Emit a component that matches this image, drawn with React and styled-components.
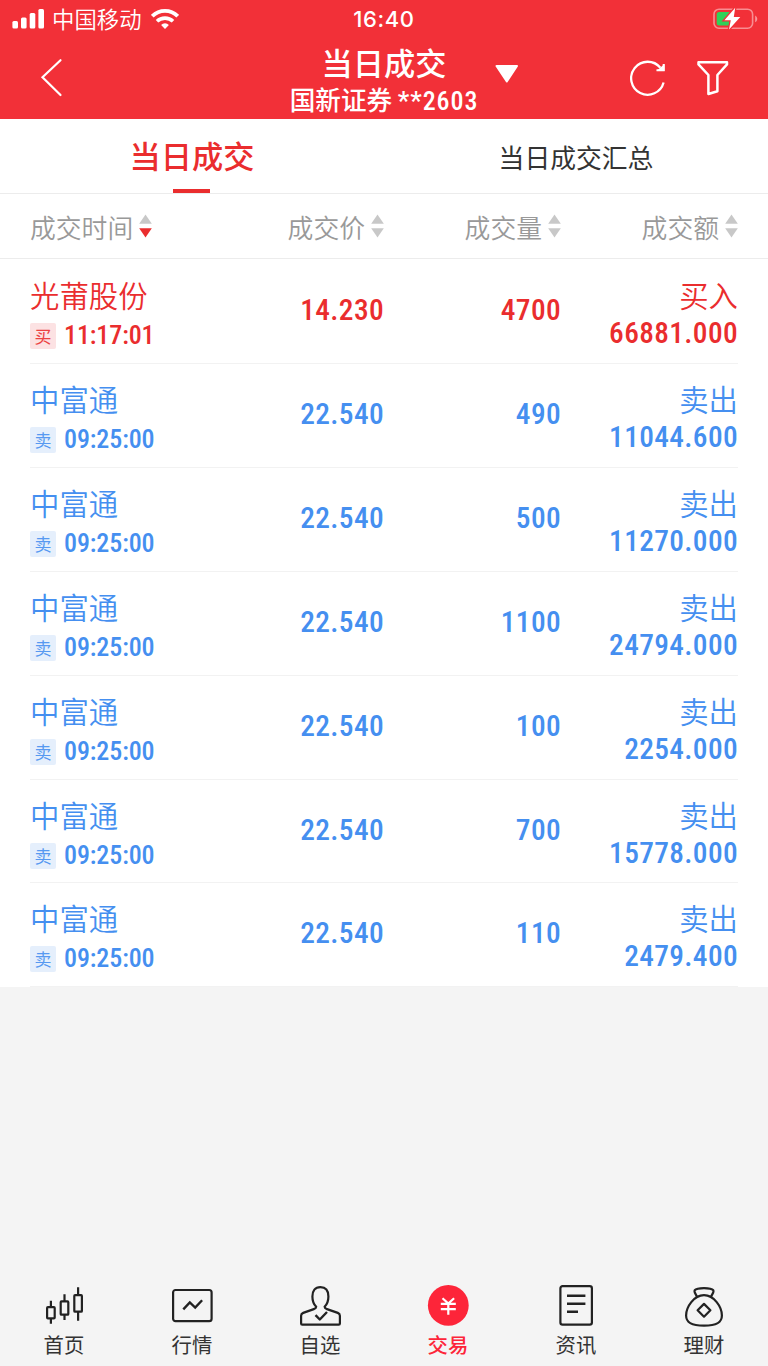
import React from "react";
import styled, { createGlobalStyle } from "styled-components";

const RED = "#ea2d2e";
const BLUE = "#458ff0";

const trades = [
  { name: "光莆股份", time: "11:17:01", price: "14.230", volume: "4700", amount: "66881.000", buy: true },
  { name: "中富通", time: "09:25:00", price: "22.540", volume: "490", amount: "11044.600" },
  { name: "中富通", time: "09:25:00", price: "22.540", volume: "500", amount: "11270.000" },
  { name: "中富通", time: "09:25:00", price: "22.540", volume: "1100", amount: "24794.000" },
  { name: "中富通", time: "09:25:00", price: "22.540", volume: "100", amount: "2254.000" },
  { name: "中富通", time: "09:25:00", price: "22.540", volume: "700", amount: "15778.000" },
  { name: "中富通", time: "09:25:00", price: "22.540", volume: "110", amount: "2479.400" },
];

const columns = [
  { label: "成交时间", sorted: true },
  { label: "成交价" },
  { label: "成交量" },
  { label: "成交额" },
];

const CandleIcon = () => (
  <svg width="44" height="44" viewBox="0 0 44 44" fill="none" stroke="#222" strokeWidth="2.2">
    <rect x="5.1" y="22.1" width="7.6" height="11.2" rx="0.8" />
    <path d="M8.9 15.7v6.4M8.9 33.3v5.4" />
    <rect x="18.7" y="16.4" width="7.6" height="13.3" rx="0.8" />
    <path d="M22.5 9.3v7M22.5 29.7v5.3" />
    <rect x="32.3" y="10.1" width="7.6" height="16.6" rx="0.8" />
    <path d="M36.1 2.3v7.8M36.1 26.7v9" />
  </svg>
);

const ChartIcon = () => (
  <svg width="44" height="44" viewBox="0 0 44 44" fill="none" stroke="#222" strokeWidth="2.2">
    <rect x="3.1" y="5" width="38.5" height="31.2" rx="2.4" />
    <path d="M13.3 24.4l6.5-7 5.4 5.2 6.9-7.4" strokeWidth="2.4" />
  </svg>
);

const PersonIcon = () => (
  <svg width="44" height="44" viewBox="0 0 44 44" fill="none" stroke="#222" strokeWidth="2.2" strokeLinejoin="round">
    <path d="M18.2 21.8C15.6 19.2 14.4 16 14.4 11.5C14.4 5.8 17 2.1 22.4 2.1C27.8 2.1 30.4 5.8 30.4 11.5C30.4 16 29.2 19.2 26.6 21.8C26.6 23 27.6 23.6 29 24.1L39.8 27.9Q41.9 28.7 41.9 30.7V38.4Q41.9 39.6 40.7 39.6H4.3Q3.1 39.6 3.1 38.4V30.7Q3.1 28.7 5.2 27.9L15.8 24.1C17.2 23.6 18.2 23 18.2 21.8Z" />
    <path d="M17.5 30.2l4.3 4.3 7.2-7.5" strokeWidth="2.4" />
  </svg>
);

const YuanIcon = () => (
  <svg width="44" height="44" viewBox="0 0 44 44" fill="none">
    <circle cx="22.3" cy="20.4" r="20.4" fill="#fd2539" />
    <path d="M16.5 13.2L22.3 18.6L28.1 13.2M22.3 18.6V29.8M14.8 18.9H29.8M14.8 24.1H29.8" stroke="#fff" strokeWidth="2.2" />
  </svg>
);

const NewsIcon = () => (
  <svg width="44" height="44" viewBox="0 0 44 44" fill="none" stroke="#222" strokeWidth="2.2">
    <rect x="6.4" y="1.2" width="31.5" height="38.4" rx="2.2" />
    <path d="M13 10.7h18.4M13 18.7h18.4M13 26.7h11" strokeWidth="2.4" />
  </svg>
);

const MoneyIcon = () => (
  <svg width="44" height="44" viewBox="0 0 44 44" fill="none" stroke="#222" strokeWidth="2.2" strokeLinejoin="round">
    <path d="M15 12C14.2 9.3 11.6 6.9 12.7 5.3C15 2.4 29 2.4 31.3 5.3C32.4 6.9 29.8 9.3 29 12" />
    <path d="M22 10.2C12 10.2 4.1 22 4.1 30.5C4.1 37.5 9 40.7 22 40.7C35 40.7 39.9 37.5 39.9 30.5C39.9 22 32 10.2 22 10.2Z" />
    <path d="M22 18.9l6.4 6.4l-6.4 6.4l-6.4-6.4z" />
  </svg>
);

const navItems = [
  { label: "首页", Icon: CandleIcon },
  { label: "行情", Icon: ChartIcon },
  { label: "自选", Icon: PersonIcon },
  { label: "交易", Icon: YuanIcon, active: true },
  { label: "资讯", Icon: NewsIcon },
  { label: "理财", Icon: MoneyIcon },
];

const App = () => {
  return (
    <Page>
      <GlobalStyle />
      <Header>
        <StatusBar>
          <Carrier>
            <svg width="33" height="20" viewBox="0 0 33 20" fill="#fff">
              <rect x="0.4" y="12" width="5.6" height="7.5" rx="1.5" />
              <rect x="9" y="8.5" width="5.6" height="11" rx="1.5" />
              <rect x="17.7" y="4" width="5.6" height="15.5" rx="1.5" />
              <rect x="26.4" y="0" width="5.6" height="19.5" rx="1.5" />
            </svg>
            <span>中国移动</span>
            <svg width="28" height="20" viewBox="0 0 28 20" fill="none" stroke="#fff" strokeWidth="3.8">
              <path d="M1.3 7.2a18 18 0 0 1 25.4 0" />
              <path d="M6 12.3a11.6 11.6 0 0 1 16 0" strokeWidth="3.6" />
              <path d="M14 20l-3.9-4.1a5.6 5.6 0 0 1 7.8 0z" fill="#fff" stroke="none" />
            </svg>
          </Carrier>
          <Clock>16:40</Clock>
          <Battery>
            <svg width="46" height="24" viewBox="0 0 46 24" fill="none">
              <rect x="2" y="2.2" width="38.6" height="19" rx="5" stroke="#fff" strokeOpacity="0.45" strokeWidth="1.6" />
              <path d="M43.2 8.5v6.8c2.7-1.4 2.7-5.4 0-6.8z" fill="#fff" fillOpacity="0.5" />
              <rect x="4.7" y="5" width="14" height="13.5" rx="2.5" fill="#30d158" />
              <path d="M23.2 0.8L12.4 13.2H18.8L17 22.5L28.3 10.1H21.8Z" fill="#fff" stroke="#f23038" strokeWidth="2.6" paintOrder="stroke" />
            </svg>
          </Battery>
        </StatusBar>
        <TitleBar>
          <Back>
            <svg width="24" height="40" viewBox="0 0 24 40" fill="none" stroke="#fff" strokeWidth="2.2" strokeLinecap="round">
              <path d="M20.5 3.2L2.5 20.3L20.5 38" />
            </svg>
          </Back>
          <Titles>
            <Title>当日成交</Title>
            <Account>国新证券 <Digits>**2603</Digits></Account>
          </Titles>
          <Actions>
            <svg width="24" height="20" viewBox="0 0 24 20" fill="#fff" stroke="#fff" strokeWidth="2" strokeLinejoin="round">
              <path d="M1.5 2H22L11.8 17.5Z" />
            </svg>
            <svg width="38" height="40" viewBox="0 0 38 40" fill="none" stroke="#fff" strokeWidth="2.3">
              <path d="M33.6 24.5A16.5 16.5 0 1 1 30.4 9.8" />
              <path d="M33.7 6V12.3H26.5" strokeWidth="2" />
              <path d="M34.5 6V13H26.5Z" fill="#fff" stroke="none" />
            </svg>
            <svg width="32" height="38" viewBox="0 0 32 38" fill="none" stroke="#fff" strokeWidth="2.5" strokeLinejoin="round">
              <path d="M1.5 2.2H30V4.4L20.4 15V31.2L11.4 34V15L1.5 4.4Z" />
            </svg>
          </Actions>
        </TitleBar>
      </Header>

      <Tabs>
        <Tab $active>当日成交</Tab>
        <Tab>当日成交汇总</Tab>
      </Tabs>

      <TableHead>
        {columns.map((col) => (
          <HeadCell key={col.label}>
            {col.label}
            <svg width="13" height="24" viewBox="0 0 13 24">
              <path d="M0.2 9.8L6.5 0.5L12.8 9.8Z" fill="#c8c8c8" />
              <path d="M0.2 14.2L6.5 23.5L12.8 14.2Z" fill={col.sorted ? RED : "#c8c8c8"} />
            </svg>
          </HeadCell>
        ))}
      </TableHead>

      <List>
        {trades.map((t, index) => (
          <Row key={index} $buy={t.buy}>
            <div>
              <Name>{t.name}</Name>
              <TimeLine>
                <Tag $buy={t.buy}>{t.buy ? "买" : "卖"}</Tag>
                <Time>{t.time}</Time>
              </TimeLine>
            </div>
            <Num>{t.price}</Num>
            <Num>{t.volume}</Num>
            <AmountCell>
              <Name>{t.buy ? "买入" : "卖出"}</Name>
              <Amount>{t.amount}</Amount>
            </AmountCell>
          </Row>
        ))}
      </List>

      <BottomNav>
        {navItems.map(({ label, Icon, active }) => (
          <NavItem key={label} $active={active}>
            <Icon />
            {label}
          </NavItem>
        ))}
      </BottomNav>
    </Page>
  );
};

const GlobalStyle = createGlobalStyle`
* {
  box-sizing: border-box;
}
body {
  margin: 0;
  background: #f4f4f4;
}
svg {
  display: block;
  flex: none;
}
`;

const Page = styled.div`
display: flex;
flex-direction: column;
width: 768px;
height: 1366px;
overflow: hidden;
background: #f4f4f4;
font-family: "Noto Sans CJK SC", sans-serif;
`;

const Header = styled.header`
height: 119px;
background: #f23038;
color: #fff;
`;

const StatusBar = styled.div`
display: grid;
grid-template-columns: 1fr auto 1fr;
align-items: center;
height: 40px;
padding: 0 10px 0 12px;
`;

const Carrier = styled.div`
display: flex;
align-items: center;
gap: 7px;
font-size: 22.4px;
font-weight: 350;
line-height: 36px;
padding-bottom: 3px;

span {
  padding-bottom: 1px;
}
span + svg {
  margin-left: 2px;
}
`;

const Clock = styled.div`
font-family: Inter, sans-serif;
font-size: 22px;
font-weight: 500;
letter-spacing: 0.6px;
padding: 0 2px 2px 0;
`;

const Battery = styled.div`
display: flex;
justify-content: flex-end;
padding-bottom: 3px;
`;

const TitleBar = styled.div`
display: grid;
grid-template-columns: 1fr auto 1fr;
height: 79px;
`;

const Back = styled.div`
padding: 17px 0 0 40px;
`;

const Titles = styled.div`
text-align: center;
`;

const Title = styled.div`
font-size: 31.2px;
font-weight: 500;
line-height: 43px;
`;

const Account = styled.div`
font-size: 25.6px;
font-weight: 500;
line-height: 32px;
white-space: pre;
`;

const Digits = styled.span`
font-family: "Roboto Condensed", Roboto, sans-serif;
font-stretch: 75%;
font-size: 26px;
letter-spacing: 0.9px;
`;

const Actions = styled.div`
display: flex;
align-items: flex-start;
padding: 24px 0 0 17px;

svg:nth-child(2) {
  margin: -6px 0 0 111px;
}
svg:nth-child(3) {
  margin: -4px 0 0 29px;
}
`;

const Tabs = styled.div`
display: grid;
grid-template-columns: 1fr 1fr;
height: 75px;
background: #fff;
border-bottom: 1px solid #ececec;
`;

const Tab = styled.div`
display: flex;
flex-direction: column;
align-items: center;
font-size: ${props => props.$active ? "31.2px" : "25.8px"};
font-weight: ${props => props.$active ? 500 : 400};
color: ${props => props.$active ? RED : "#333"};
line-height: ${props => props.$active ? "72px" : "75px"};

&::after {
  content: "";
  display: ${props => props.$active ? "block" : "none"};
  width: 37px;
  height: 4px;
  margin: -2px 1px 0 0;
  background: ${RED};
}
`;

const TableHead = styled.div`
display: grid;
grid-template-columns: repeat(4, 1fr);
height: 65px;
padding: 0 30px;
background: #fff;
border-bottom: 1px solid #ececec;
`;

const HeadCell = styled.div`
display: flex;
align-items: center;
justify-content: flex-end;
gap: 6px;
font-size: 25.8px;
font-weight: 350;
color: #999;

&:first-child {
  justify-content: flex-start;
}
`;

const List = styled.div`
padding: 0.9px 30px 0;
background: #fff;
`;

const Row = styled.div`
display: grid;
grid-template-columns: repeat(4, 1fr);
height: 103.93px;
border-bottom: 1px solid #f2f2f2;
color: ${props => props.$buy ? RED : BLUE};
`;

const Name = styled.div`
font-size: 29.4px;
font-weight: 350;
line-height: 36px;
padding-top: 16px;
white-space: nowrap;
`;

const TimeLine = styled.div`
display: flex;
align-items: center;
gap: 8px;
height: 48px;
`;

const Tag = styled.span`
width: 26px;
height: 26px;
border-radius: 2px;
background: ${props => props.$buy ? "#fcdfe0" : "#e3eefc"};
font-size: 17px;
line-height: 26px;
text-align: center;
opacity: 0.9;
`;

const Time = styled.span`
font-family: "Roboto Condensed", Roboto, sans-serif;
font-stretch: 75%;
font-size: 26px;
font-weight: 500;
letter-spacing: -0.1px;
padding-bottom: 2px;
`;

const Num = styled.div`
font-family: "Roboto Condensed", Roboto, sans-serif;
font-stretch: 75%;
font-size: 29.4px;
font-weight: 500;
letter-spacing: 0.35px;
line-height: 101px;
text-align: right;
`;

const AmountCell = styled.div`
text-align: right;
`;

const Amount = styled(Num)`
line-height: 42px;
`;

const BottomNav = styled.nav`
display: grid;
grid-template-columns: repeat(6, 1fr);
margin-top: auto;
height: 81px;
`;

const NavItem = styled.div`
display: flex;
flex-direction: column;
align-items: center;
font-size: 20.4px;
font-weight: ${props => props.$active ? 500 : 400};
line-height: 30px;
color: ${props => props.$active ? "#fd2539" : "#333"};
`;

export default App;
